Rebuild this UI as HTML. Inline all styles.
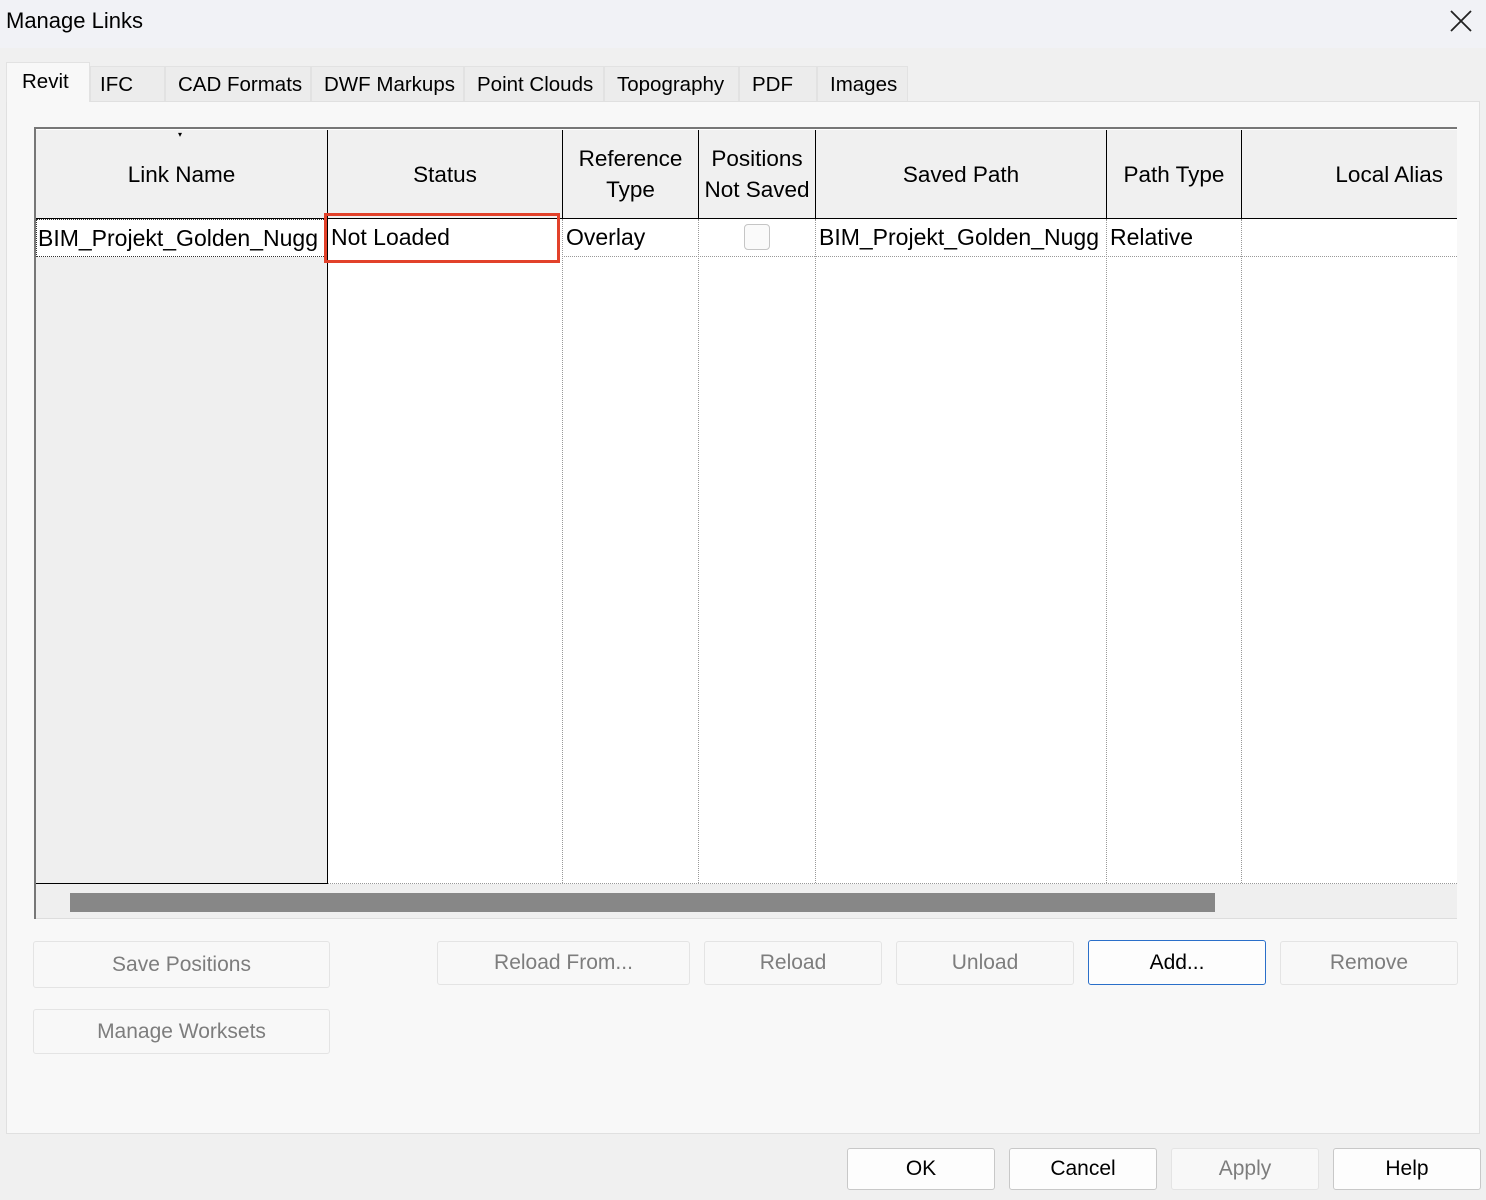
<!DOCTYPE html>
<html><head><meta charset="utf-8"><style>
*{box-sizing:border-box;margin:0;padding:0}
body{width:1486px;height:1200px;background:#f0f0f0;font-family:"Liberation Sans","DejaVu Sans",sans-serif;color:#000;position:relative;overflow:hidden;font-size:21px}
.abs{position:absolute}
.title{left:0;top:0;width:1486px;height:48px;background:#f1f2f6}
.tab{position:absolute;top:66px;height:35px;background:#ececec;border:1px solid #e2e2e2;border-bottom:none;font-size:20.5px;line-height:36px;padding-left:12px}
.panel{left:6px;top:101px;width:1474px;height:1033px;background:#f8f8f8;border:1px solid #e0e0e0}
.hdr{position:absolute;top:130px;height:89px;background:#f0f0f0;border-right:1.5px solid #000;border-bottom:1.5px solid #000;display:flex;align-items:center;justify-content:center;text-align:center;line-height:31px;font-size:22.5px}
.cell{position:absolute;top:219px;height:38px;line-height:36px;padding-left:3px;white-space:nowrap;overflow:hidden;font-size:23px}
.vl{position:absolute;top:219px;height:664px;border-left:1px dotted #999}
.btn{position:absolute;background:#f8f8f8;border:1px solid #e4e4e4;border-radius:3px;color:#7d7d7d;display:flex;align-items:center;justify-content:center;font-size:21px}
.btn.k{color:#000;border-color:#c8c8c8;background:#fdfdfd}
</style></head><body>
<div class="abs title"></div>
<div class="abs" style="left:6px;top:8px;font-size:22px">Manage Links</div>
<svg class="abs" style="left:1450px;top:10px" width="22" height="22"><path d="M1 1L21 21M21 1L1 21" stroke="#222" stroke-width="1.8"/></svg>
<div class="abs panel"></div>
<div class="tab" style="left:6px;top:62px;height:40px;width:84px;background:#f8f8f8;line-height:38px;padding-left:15px">Revit</div>
<div class="tab" style="left:90px;width:75px;padding-left:9px">IFC</div>
<div class="tab" style="left:165px;width:146px">CAD Formats</div>
<div class="tab" style="left:311px;width:153px">DWF Markups</div>
<div class="tab" style="left:464px;width:140px">Point Clouds</div>
<div class="tab" style="left:604px;width:135px">Topography</div>
<div class="tab" style="left:739px;width:78px">PDF</div>
<div class="tab" style="left:817px;width:91px">Images</div>

<div class="abs" style="left:34px;top:127px;width:1423px;height:792px;background:#fff;border-top:2px solid #777;border-left:2px solid #777"></div>
<div class="abs" style="left:36px;top:219px;width:292px;height:665px;background:#efefef;border-right:1.5px solid #000;border-bottom:1.5px solid #000"></div>
<div class="abs" style="left:36px;top:884px;width:1421px;height:35px;background:#efefef;border-bottom:1px solid #ddd"></div>
<div class="abs" style="left:70px;top:893px;width:1145px;height:19px;background:#878787"></div>
<div class="abs" style="left:328px;top:883px;width:1129px;border-top:1px dotted #999"></div>

<div class="hdr" style="left:36px;width:292px">Link Name</div>
<div class="abs" style="left:178px;top:130px;font-size:8px">▾</div>
<div class="hdr" style="left:328px;width:235px">Status</div>
<div class="hdr" style="left:563px;width:136px">Reference<br>Type</div>
<div class="hdr" style="left:699px;width:117px">Positions<br>Not Saved</div>
<div class="hdr" style="left:816px;width:291px">Saved Path</div>
<div class="hdr" style="left:1107px;width:135px">Path Type</div>
<div class="hdr" style="left:1242px;width:215px;border-right:none;justify-content:flex-end;padding-right:14px">Local Alias</div>

<div class="vl" style="left:562px"></div>
<div class="vl" style="left:698px"></div>
<div class="vl" style="left:815px"></div>
<div class="vl" style="left:1106px"></div>
<div class="vl" style="left:1241px"></div>
<div class="abs" style="left:328px;top:256px;width:1129px;border-top:1px dotted #999"></div>
<div class="cell" style="left:36px;width:290px;background:#fff;border:1px dotted #333;padding-left:1px">BIM_Projekt_Golden_Nugg</div>
<div class="cell" style="left:328px;width:234px;background:#fff">Not Loaded</div>
<div class="abs" style="left:324px;top:213px;width:236px;height:50px;border:3px solid #e2412a"></div>
<div class="cell" style="left:563px;width:135px">Overlay</div>
<div class="abs" style="left:744px;top:224px;width:26px;height:26px;border:1px solid #c5c5c5;border-radius:4px;background:#fafafa"></div>
<div class="cell" style="left:816px;width:290px">BIM_Projekt_Golden_Nugg</div>
<div class="cell" style="left:1107px;width:134px">Relative</div>

<div class="btn" style="left:33px;top:941px;width:297px;height:47px">Save Positions</div>
<div class="btn" style="left:33px;top:1009px;width:297px;height:45px">Manage Worksets</div>
<div class="btn" style="left:437px;top:941px;width:253px;height:44px">Reload From...</div>
<div class="btn" style="left:704px;top:941px;width:178px;height:44px">Reload</div>
<div class="btn" style="left:896px;top:941px;width:178px;height:44px">Unload</div>
<div class="btn k" style="left:1088px;top:940px;width:178px;height:45px;border:1.5px solid #2a6fc9">Add...</div>
<div class="btn" style="left:1280px;top:941px;width:178px;height:44px">Remove</div>

<div class="btn k" style="left:847px;top:1148px;width:148px;height:42px">OK</div>
<div class="btn k" style="left:1009px;top:1148px;width:148px;height:42px">Cancel</div>
<div class="btn" style="left:1171px;top:1148px;width:148px;height:42px">Apply</div>
<div class="btn k" style="left:1333px;top:1148px;width:148px;height:42px">Help</div>
</body></html>
